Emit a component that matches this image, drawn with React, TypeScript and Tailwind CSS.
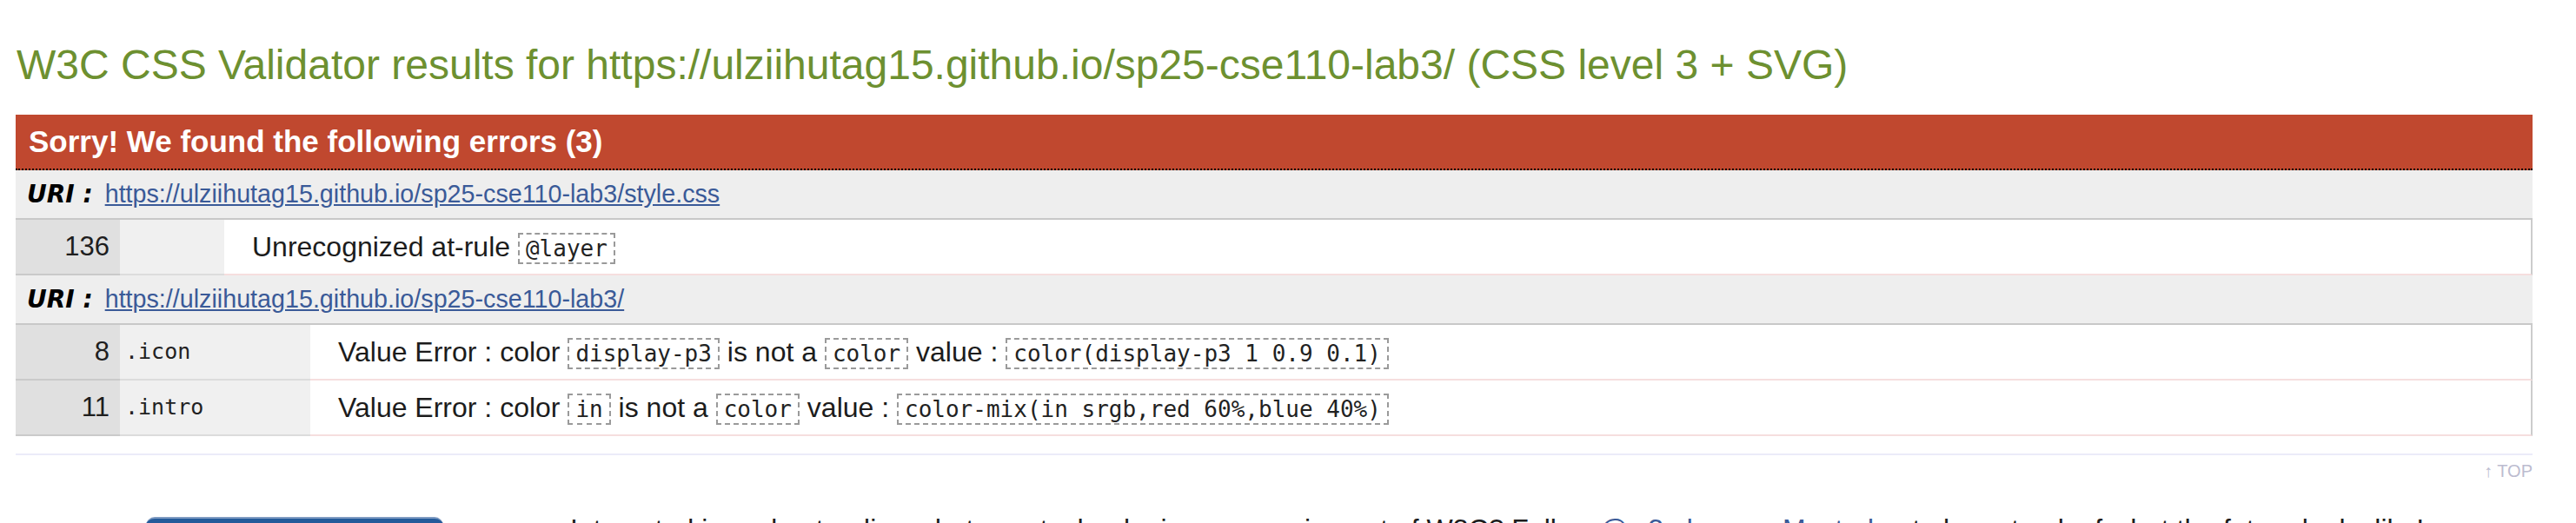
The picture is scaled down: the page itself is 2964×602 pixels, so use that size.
const sans = "font-['Liberation_Sans',Arial,Helvetica,sans-serif]";
const mono = "font-['DejaVu_Sans_Mono','Liberation_Mono',monospace]";

function Code({ children }: { children: string }) {
  return (
    <span
      className={`${mono} inline-block border-2 border-dashed border-[#9a9a9a] px-[7px] text-[26px] leading-[32px] text-[#222]`}
    >
      {children}
    </span>
  );
}

function UriRow({ href }: { href: string }) {
  return (
    <div className="flex h-[57px] items-center border-b-2 border-[#c8c8c8] bg-[#eeeeee] pl-[13px]">
      <span className="font-['DejaVu_Sans',Verdana,sans-serif] text-[28px] font-bold italic text-black">
        URI :
      </span>
      <a className="ml-[14px] text-[28.7px] text-[#3a5a98] underline" href="#">
        {href}
      </a>
    </div>
  );
}

function ErrorRow({
  line,
  context,
  contextWidth,
  children,
}: {
  line: string;
  context: string;
  contextWidth: string;
  children: React.ReactNode;
}) {
  return (
    <div className="flex h-[64px]">
      <div className="flex w-[120px] items-center justify-end border-b-2 border-[#cacaca] bg-[#e0e0e0] pr-[12px] text-[31px] text-[#1e1e1e]">
        {line}
      </div>
      <div
        className={`${contextWidth} ${mono} flex items-center border-b-2 border-[#dcdcdc] bg-[#f0f0f0] pl-[6px] text-[25px] text-[#222]`}
      >
        {context}
      </div>
      <div className="flex flex-1 items-center whitespace-nowrap border-b-2 border-r-2 border-b-[#f6dede] border-r-[#cccccc] bg-white pl-[32px] text-[32px] text-[#1c1c1c]">
        <div>{children}</div>
      </div>
    </div>
  );
}

export default function App() {
  return (
    <div className={`${sans} h-[602px] w-[2964px] overflow-hidden bg-white`}>
      <h2 className="whitespace-nowrap pl-[19px] pt-[51px] text-[48px] font-normal leading-none text-[#6d9030]">
        W3C CSS Validator results for https://ulziihutag15.github.io/sp25-cse110-lab3/ (CSS level 3 + SVG)
      </h2>

      <div className="mx-[18px] mt-[33px] w-[2896px]">
        <div className="flex h-[64px] items-center border-b-2 border-dotted border-black bg-[#c0482f] pl-[15px] text-[35px] font-bold text-white">
          Sorry! We found the following errors (3)
        </div>

        <UriRow href="https://ulziihutag15.github.io/sp25-cse110-lab3/style.css" />
        <ErrorRow line="136" context="" contextWidth="w-[120px]">
          Unrecognized at-rule <Code>@layer</Code>
        </ErrorRow>

        <UriRow href="https://ulziihutag15.github.io/sp25-cse110-lab3/" />
        <ErrorRow line="8" context=".icon" contextWidth="w-[219px]">
          Value Error : color <Code>display-p3</Code> is not a <Code>color</Code> value :{" "}
          <Code>color(display-p3 1 0.9 0.1)</Code>
        </ErrorRow>
        <ErrorRow line="11" context=".intro" contextWidth="w-[219px]">
          Value Error : color <Code>in</Code> is not a <Code>color</Code> value :{" "}
          <Code>color-mix(in srgb,red 60%,blue 40%)</Code>
        </ErrorRow>

        <div className="mt-[20px] h-[2px] bg-[#ebebf9]" />
        <div className="mt-[8px] flex justify-end text-[20px] leading-none text-[#bcbcd0]">
          <span>↑ TOP</span>
        </div>
      </div>

      <div className="mt-[41px] flex items-start">
        <div className="ml-[168px] mt-[2px] h-[80px] w-[342px] rounded-[10px] border-t-2 border-[#7f9bc2] bg-[#245a9a]" />
        <p className="ml-[146px] whitespace-nowrap text-[32px] leading-none text-[#1c1c1c]">
          Interested in understanding what new technologies are coming out of W3C? Follow{" "}
          <a className="text-[#3a5a98]" href="#">
            @w3cdevs
          </a>{" "}
          on{" "}
          <a className="text-[#3a5a98]" href="#">
            Mastodon
          </a>{" "}
          to keep track of what the future looks like!
        </p>
      </div>
    </div>
  );
}
